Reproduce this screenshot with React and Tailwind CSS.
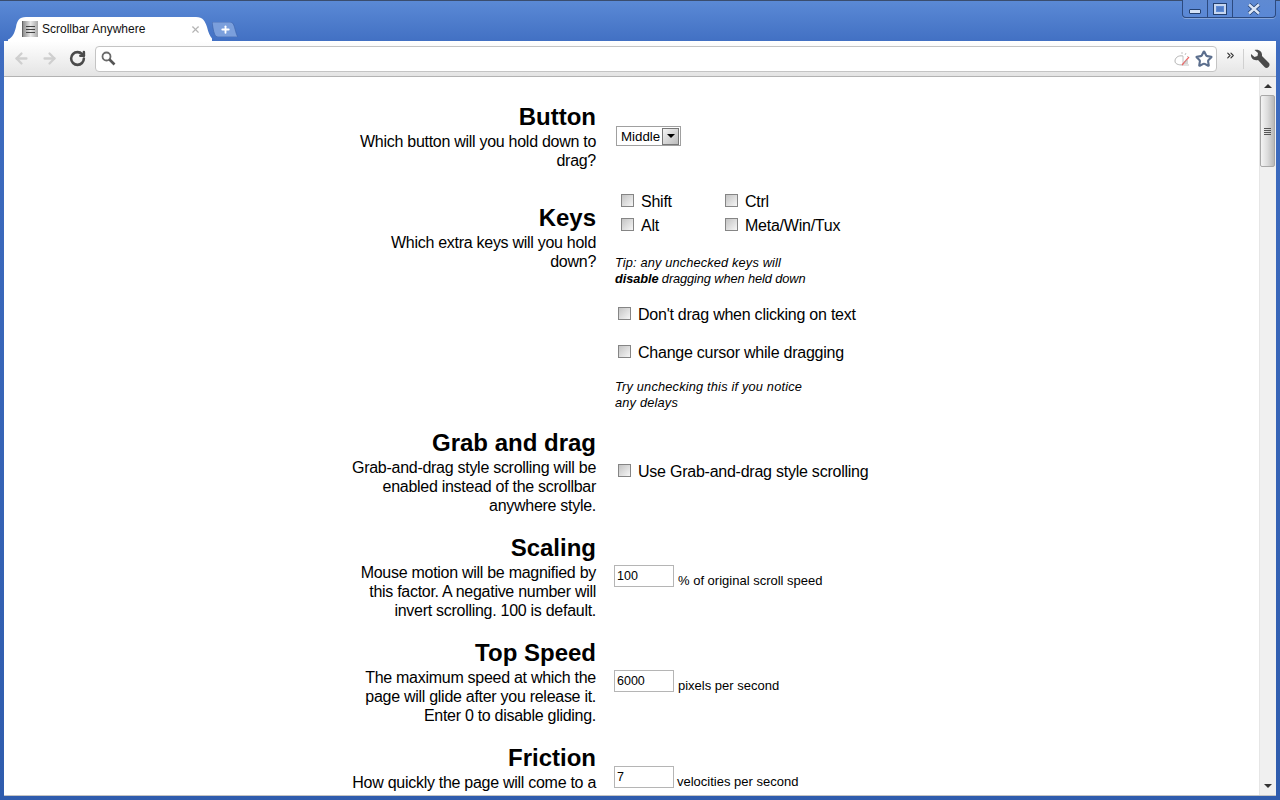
import React from 'react'
import { ArrowLeft, ArrowRight, RotateCw, Star, X, Plus, ChevronsRight } from 'lucide-react'

const CheckRow = ({ label, className = '' }) => (
  <label className={`flex items-center h-6 gap-[7px] tracking-[-0.24px] ${className}`}>
    <input type="checkbox" className="appearance-none w-[13px] h-[13px] mb-[2px] border border-[#858585] bg-gradient-to-br from-[#c4c4c4] to-[#f6f6f6] shrink-0" />
    <span className="pt-[2px]">{label}</span>
  </label>
)

const Section = ({ title, desc, heightClass, leftClass = '', rightClass = '', children }) => (
  <div className={`flex gap-[18px] ${heightClass}`}>
    <div className={`w-[247px] text-right shrink-0 ${leftClass}`}>
      <h2 className="text-2xl font-bold leading-[28px]">{title}</h2>
      <p className="mt-px leading-[19px] tracking-[-0.28px]">{desc}</p>
    </div>
    <div className={rightClass}>{children}</div>
  </div>
)

const NumberField = ({ value, unit, gapClass = 'ml-1' }) => (
  <div className="flex items-start text-[13px]">
    <input defaultValue={value} className="w-[60px] h-[22px] border border-[#b5b5b5] px-[2px] text-[12.5px] outline-none" />
    <span className={`${gapClass} mt-[7px] leading-[18px]`}>{unit}</span>
  </div>
)

const TitleBar = () => (
  <div className="relative h-[41px] shrink-0 flex items-end pl-[8px] border-t border-[#3a4d6e]">
    <div className="relative w-[204px] h-[24px] flex items-center pl-[14px] pr-[11px] text-xs text-[#111]">
      <svg className="absolute inset-0" width="204" height="24" viewBox="0 0 204 24">
        <path d="M-4 24 C4 22 6 18 8 10 C9 4 11 0 18 0 L188 0 C195 0 197 4 199 10 C201 18 203 22 208 24 Z" fill="#ffffff" />
      </svg>
      <span className="relative w-[16px] h-[16px] bg-gradient-to-r from-[#8f8f8f] via-[#e8e8e8] to-[#a8a8a8] border-l border-[#666] flex flex-col justify-center gap-[2px] px-[3px] mr-[4px]">
        <i className="block h-px bg-[#444]" />
        <i className="block h-px bg-[#444]" />
        <i className="block h-px bg-[#444]" />
      </span>
      <span className="relative flex-1">Scrollbar Anywhere</span>
      <X className="relative text-[#b4b4b4]" size={11} strokeWidth={2.5} />
    </div>
    <div className="relative w-[26px] h-[15px] mb-[4px] flex items-center justify-center">
      <svg className="absolute inset-0" width="26" height="15" viewBox="0 0 26 15">
        <path d="M0 0 L18 0 C21 0 22 3 23 7 C24 11 25 14 26 15 L6 15 C3 15 2 11 1 6 Z" fill="#7b9fdc" stroke="#3f66ad" strokeWidth="0.7" />
      </svg>
      <Plus className="relative text-white" size={11} strokeWidth={4} />
    </div>
    <div className="absolute right-[4px] -top-px h-[18px] w-[94px] flex bg-gradient-to-b from-[#5f8ad2] to-[#5a88d6] border border-t-0 border-[#2c4a80] rounded-b-[4px] shadow-[0_1px_0_rgba(255,255,255,0.3)]">
      <div className="w-[25px] flex items-center justify-center border-r border-[#2c4a80]">
        <span className="block w-[12px] h-[5px] mt-[5px] bg-[#d5e2f6] border border-[#24406f] rounded-[1px]" />
      </div>
      <div className="w-[25px] flex items-center justify-center border-r border-[#2c4a80]">
        <span className="flex items-center justify-center w-[12px] h-[10px] border-2 border-[#c6d6f0] outline outline-1 outline-[#24406f]">
          <i className="block w-[6px] h-[4px] bg-[#4f7cc8]" />
        </span>
      </div>
      <div className="flex-1 flex items-center justify-center">
        <svg width="16" height="12" viewBox="0 0 16 12">
          <path d="M3 1.5 L13 10.5 M13 1.5 L3 10.5" stroke="#24406f" strokeWidth="4" />
          <path d="M3 1.5 L13 10.5 M13 1.5 L3 10.5" stroke="#dbe6f7" strokeWidth="2.4" />
        </svg>
      </div>
    </div>
  </div>
)

const Toolbar = () => (
  <div className="h-[36px] shrink-0 flex items-center bg-gradient-to-b from-white to-[#e4e4e4] border-b border-[#b3b3b3]">
    <ArrowLeft className="ml-[9px] text-[#cfcfcf]" size={17} strokeWidth={3.2} />
    <ArrowRight className="ml-[11px] text-[#cfcfcf]" size={17} strokeWidth={3.2} />
    <RotateCw className="ml-[11px] text-[#4a4a4a]" size={17} strokeWidth={3.6} />
    <div className="ml-[9px] w-[1122px] h-[26px] flex items-center bg-white border border-[#c4c4c4] rounded-[4px] pl-[5px] pr-[3px]">
      <svg width="15" height="15" viewBox="0 0 15 15">
        <circle cx="5.5" cy="5.5" r="4" fill="none" stroke="#6a6a6a" strokeWidth="1.8" />
        <path d="M8.5 8.5 L13.5 13.5" stroke="#555" strokeWidth="2.6" />
      </svg>
      <svg className="ml-auto" width="18" height="16" viewBox="0 0 18 16">
        <path d="M9 5 C4 4 1 7 1 10 C1 13 4 14 9 14" fill="none" stroke="#b4b4b4" />
        <path d="M9 5 L9 14 L15 14 M8 1 L8 3 M12 2 L11 4 M14 5 L13 6" fill="none" stroke="#c4c4c4" />
        <path d="M8 14 L15 6" stroke="#e66" strokeWidth="1.2" />
        <path d="M10 12 L14 12 M11 10 L14 10" stroke="#aaa" />
      </svg>
      <Star className="ml-[3px] text-[#5c6f8e]" size={18} strokeWidth={2.8} />
    </div>
    <ChevronsRight className="ml-[8px] text-[#333] mb-[7px]" size={11} strokeWidth={2.5} />
    <div className="ml-[7px] w-px h-[20px] bg-[#d0d0d0]" />
    <svg className="ml-[6px]" width="20" height="20" viewBox="0 0 20 20">
      <path d="M1 5 L4.5 8 L7.5 7 L8 4 L4.5 1 C9 0 12.5 2.5 12 7 L19 14 C20 15.5 19.5 17 18.5 18 C17.5 19 16 19.5 14.5 18 L8 11 C3.5 12 0.5 9 1 5 Z" fill="#4a4a4a" />
    </svg>
  </div>
)

const Scrollbar = () => (
  <div className="w-[17px] shrink-0 flex flex-col items-center bg-[#f0f0f0] border-l border-[#e6e6e6]">
    <span className="mt-[7px] w-0 h-0 border-x-[4px] border-x-transparent border-b-[4px] border-b-[#333]" />
    <div className="mt-[7px] mr-[2px] w-[15px] h-[72px] flex flex-col items-center justify-center gap-[1px] rounded-[2px] border border-[#a8a8a8] bg-gradient-to-r from-[#f4f4f4] via-[#dcdcdc] to-[#b8b8b8]">
      <i className="block w-[7px] h-px bg-[#555]" />
      <i className="block w-[7px] h-px bg-[#555]" />
      <i className="block w-[7px] h-px bg-[#555]" />
      <i className="block w-[7px] h-px bg-[#555]" />
    </div>
    <span className="mt-auto mb-[7px] w-0 h-0 border-x-[4px] border-x-transparent border-t-[4px] border-t-[#333]" />
  </div>
)

export default function App() {
  return (
    <div className="w-[1280px] h-[800px] overflow-hidden flex flex-col bg-gradient-to-b from-[#5b8ad6] via-[#3e6cc0] via-[6%] to-[#2f5cad] font-['Liberation_Sans',Arial,sans-serif] text-black">
      <TitleBar />
      <div className="flex-1 min-h-0 flex flex-col mx-[4px] mb-[4px]">
        <Toolbar />
        <div className="flex-1 min-h-0 flex bg-white border-b border-[#c4c4c4]">
          <main className="flex-1 overflow-hidden pt-[26px] pl-[345px] text-base">
            <Section
              title="Button"
              desc="Which button will you hold down to drag?"
              heightClass="h-[86px]"
              rightClass="pt-[23px] pl-[2px]"
            >
              <div className="w-[65px] h-[20px] flex items-center justify-between border border-[#a0a0a0] text-[13.3px] pl-[4px] pr-px">
                <span className="pt-px">Middle</span>
                <span className="w-[17px] h-[17px] flex items-center justify-center border border-[#777] bg-gradient-to-br from-[#f4f4f4] to-[#bcbcbc]">
                  <i className="block w-0 h-0 border-x-[4px] border-x-transparent border-t-[4px] border-t-black" />
                </span>
              </div>
            </Section>

            <Section
              title="Keys"
              desc="Which extra keys will you hold down?"
              heightClass="h-[240px]"
              leftClass="pt-[15px]"
            >
              <div className="grid grid-cols-[104px_auto] pl-[7px]">
                <CheckRow label="Shift" />
                <CheckRow label="Ctrl" />
                <CheckRow label="Alt" />
                <CheckRow label="Meta/Win/Tux" />
              </div>
              <p className="mt-[18px] pl-px text-[12.8px] leading-4 italic tracking-[0.14px]">
                Tip: any unchecked keys will<br />
                <span className="tracking-[-0.1px]"><b>disable</b> dragging when held down</span>
              </p>
              <CheckRow label="Don't drag when clicking on text" className="mt-[15px] pl-[4px]" />
              <CheckRow label="Change cursor while dragging" className="mt-[14px] pl-[4px]" />
              <p className="mt-[15px] pl-px text-[12.8px] leading-4 italic tracking-[0.18px]">
                Try unchecking this if you notice<br />
                any delays
              </p>
            </Section>

            <Section
              title="Grab and drag"
              desc="Grab-and-drag style scrolling will be enabled instead of the scrollbar anywhere style."
              heightClass="h-[105px]"
              rightClass="pt-[30px]"
            >
              <CheckRow label="Use Grab-and-drag style scrolling" className="pl-[4px]" />
            </Section>

            <Section
              title="Scaling"
              desc="Mouse motion will be magnified by this factor. A negative number will invert scrolling. 100 is default."
              heightClass="h-[105px]"
              rightClass="pt-[31px]"
            >
              <NumberField value="100" unit="% of original scroll speed" />
            </Section>

            <Section
              title="Top Speed"
              desc="The maximum speed at which the page will glide after you release it. Enter 0 to disable gliding."
              heightClass="h-[105px]"
              rightClass="pt-[31px]"
            >
              <NumberField value="6000" unit="pixels per second" />
            </Section>

            <Section
              title="Friction"
              desc="How quickly the page will come to a"
              heightClass="h-[51px]"
              rightClass="pt-[22px]"
            >
              <NumberField value="7" unit="velocities per second" gapClass="ml-[3px]" />
            </Section>
          </main>
          <Scrollbar />
        </div>
      </div>
    </div>
  )
}
